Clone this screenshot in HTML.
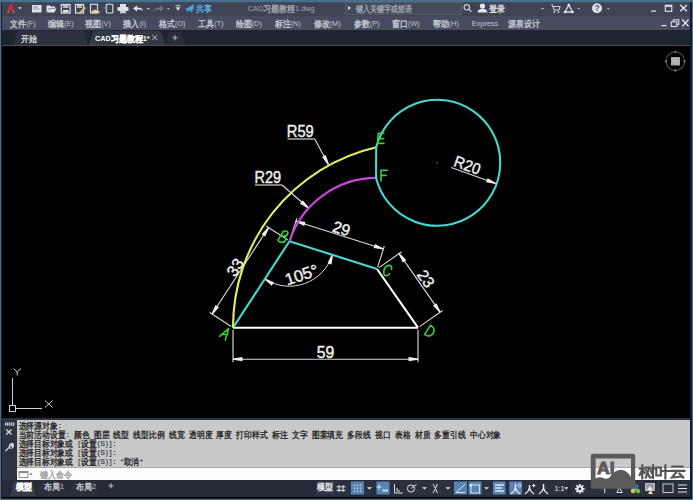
<!DOCTYPE html>
<html><head><meta charset="utf-8">
<style>
*{margin:0;padding:0;box-sizing:border-box}
html,body{width:693px;height:500px;overflow:hidden;background:#000}
body{position:relative;font-family:"Liberation Sans",sans-serif}
.a{position:absolute}
.t8{font-size:8px;line-height:9px;white-space:nowrap}
.menu span{position:absolute;top:0;font-size:8px;color:#c3c7ce;white-space:nowrap;line-height:13px}
.ui{font-family:"Liberation Sans",sans-serif;font-size:7.3px}
.cmd{font-family:"Liberation Mono",monospace;font-size:8px;letter-spacing:-0.9px}
.c{font-family:"Liberation Sans",sans-serif;font-size:1.22em;letter-spacing:0;baseline-shift:-0.08em}
.cmd .c{font-size:9.4px}
.c{stroke-width:0.38px}
.cmd .c{stroke-width:0.3px}
.cmd div{position:absolute;left:19px;font-size:8px;color:#1e1e1e;white-space:pre;line-height:9px}
</style></head><body>
<div class="a" style="left:0;top:0;width:693px;height:500px;background:#4a7090"></div>
<div class="a" style="left:1px;top:1.5px;width:690.5px;height:497px;background:#13202c"></div>
<div class="a" style="left:1.5px;top:2px;width:688.5px;height:495.5px;background:#000"></div>
<div class="a" style="left:1.5px;top:2px;width:688.5px;height:14px;background:#3f4455"></div>
<div class="a" style="left:1px;top:0;width:691px;height:2px;background:#4a7090"></div>
<div class="a" style="left:1.5px;top:2px;width:688.5px;height:1px;background:#3d4c62"></div>
<div class="a" style="left:1.5px;top:16px;width:688.5px;height:13px;background:#464b5f"></div>
<div class="a" style="left:1.5px;top:28px;width:688.5px;height:1.5px;background:#484d60"></div>
<div class="a" style="left:1.5px;top:29.5px;width:688.5px;height:15px;background:#1f252f"></div>
<div class="a" style="left:1.5px;top:44.5px;width:688.5px;height:1.5px;background:#4b5059"></div>
<div class="a" style="left:1.5px;top:418px;width:688.5px;height:2px;background:#2c323e"></div>
<div class="a" style="left:1.5px;top:420px;width:15.5px;height:60px;background:#2e3441"></div>
<div class="a" style="left:17px;top:420px;width:673px;height:47px;background:#c9c9c9"></div>
<div class="a" style="left:17px;top:467px;width:673px;height:1px;background:#a9a9a9"></div>
<div class="a" style="left:17px;top:468px;width:673px;height:12px;background:#fdfdfd"></div>
<div class="a" style="left:1.5px;top:480px;width:688.5px;height:16.5px;background:#262c37"></div>

<svg class="a" style="left:0;top:0" width="693" height="46" viewBox="0 0 693 46">
<!-- logo -->
<path d="M6.8,12.8 Q9,6 10.3,3.8 L11.7,3.8 Q13,6 15.2,12.8 L13,12.8 L11,9.8 L9,12.8 Z" fill="#b8323f"/>
<path d="M7,12.8 L8.8,10.8 L9.3,12.8 Z M15,12.8 L13.2,10.8 L12.7,12.8 Z" fill="#c87080"/>
<polygon points="18,7.3 21.6,7.3 19.8,9.5" fill="#e0e0e0"/>
<!-- new -->
<rect x="32" y="5" width="9.5" height="7.5" fill="#dde1e6"/>
<rect x="33.5" y="6.5" width="4" height="1" fill="#7a8088"/><rect x="33.5" y="8.5" width="6" height="1" fill="#9aa0a8"/>
<!-- open -->
<polygon points="46.5,5.5 50,5.5 51,6.5 55,6.5 55,8 49,8 47,12.5 46.5,12.5" fill="#dde1e6"/>
<polygon points="49,8.5 56.3,8.5 54.5,12.5 47.2,12.5" fill="#dde1e6"/>
<!-- save -->
<rect x="61.3" y="4.5" width="8.8" height="8.5" fill="none" stroke="#dde1e6" stroke-width="1.2"/>
<rect x="63" y="5" width="5.5" height="3" fill="#b8bdc4"/><rect x="63" y="10" width="5.5" height="2.5" fill="#dde1e6"/>
<!-- saveas -->
<rect x="75.5" y="4.5" width="8" height="8.5" fill="none" stroke="#dde1e6" stroke-width="1.2"/>
<rect x="77" y="5" width="5" height="3" fill="#b8bdc4"/>
<polygon points="79,12.5 84.5,7 85.8,8.3 80.3,13.5 78.8,13.5" fill="#e8c870"/>
<!-- publish -->
<rect x="90.5" y="4.3" width="7" height="8.7" fill="none" stroke="#dde1e6" stroke-width="1.1"/>
<polygon points="92,11 95,9.5 99.5,11.5 99.5,13.3 91,13.3" fill="#e0cf9a"/>
<!-- phone -->
<rect x="106.3" y="4.3" width="6.5" height="8.7" rx="0.8" fill="none" stroke="#dde1e6" stroke-width="1.1"/>
<polygon points="103.5,8 107.5,6.2 107.5,9.8" fill="#5aa0d8"/>
<!-- printer -->
<rect x="120" y="4" width="6" height="3" fill="#dde1e6"/>
<rect x="117.5" y="7" width="11" height="4" rx="0.8" fill="#dde1e6"/>
<rect x="120" y="10.5" width="6" height="2.8" fill="#c8ccd2"/>
<!-- undo -->
<path d="M133,8.5 L137,5.5 L137,7.5 Q142,7.3 143.4,10.8 Q141,9.3 137,9.6 L137,11.5 Z" fill="#dde1e6"/>
<polygon points="146.8,8 150,8 148.4,9.8" fill="#c8ccd2"/>
<!-- redo dim -->
<path d="M164,8.5 L160,5.5 L160,7.5 Q155,7.3 153.8,10.8 Q156,9.3 160,9.6 L160,11.5 Z" fill="#6e747e"/>
<polygon points="166.8,8 170,8 168.4,9.8" fill="#a8acb2"/>
<!-- customize -->
<rect x="175.5" y="5.2" width="5" height="1" fill="#d8dce0"/>
<polygon points="175.5,7.2 180.5,7.2 178,10.8" fill="#d8dce0"/>
<!-- share -->
<polygon points="185.5,9 194.5,4 192,12.5 189.5,10 188,12" fill="#4fa2dc"/>
<!-- search icon -->
<circle cx="466.8" cy="7.3" r="2.7" fill="none" stroke="#c8ccd2" stroke-width="1.2"/>
<line x1="468.8" y1="9.3" x2="471.3" y2="11.8" stroke="#c8ccd2" stroke-width="1.3"/>
<!-- user -->
<circle cx="482.5" cy="6" r="2.6" fill="#e4e6ea"/>
<path d="M477.5,12.5 Q478,8.8 482.5,8.8 Q487,8.8 487.5,12.5 Z" fill="#e4e6ea"/>
<polygon points="541,8 544,8 542.5,9.5" fill="#c8ccd2"/>
<!-- cart -->
<path d="M551,5 L552.5,5 L554,10 L559,10 L560,6.5 L553,6.5" fill="none" stroke="#c8ccd2" stroke-width="1.1"/>
<circle cx="554.5" cy="12" r="0.9" fill="#c8ccd2"/><circle cx="558.5" cy="12" r="0.9" fill="#c8ccd2"/>
<!-- network A -->
<path d="M568.8,5 L565,12 L572.5,12 Z" fill="none" stroke="#d8dce0" stroke-width="1.3"/>
<circle cx="568.8" cy="5" r="1.3" fill="#e8eaee"/><circle cx="565" cy="12" r="1.3" fill="#e8eaee"/><circle cx="572.5" cy="12" r="1.3" fill="#e8eaee"/>
<polygon points="577.3,8 580,8 578.7,9.5" fill="#c8ccd2"/>
<!-- help -->
<circle cx="597" cy="8.3" r="5" fill="#dcdfe3"/>
<text x="597" y="11.4" font-size="8.5" font-weight="bold" text-anchor="middle" fill="#555a63" font-family="Liberation Sans">?</text>
<polygon points="606.8,8 609.5,8 608.2,9.5" fill="#c8ccd2"/>
<!-- window controls -->
<rect x="651" y="10.5" width="5" height="1.2" fill="#e6e8ec"/>
<rect x="665.3" y="5.3" width="6.5" height="6" fill="none" stroke="#e6e8ec" stroke-width="1.1"/>
<rect x="665.3" y="5.3" width="6.5" height="1.5" fill="#e6e8ec"/>
<path d="M680.3,5 L686.8,11.3 M686.8,5 L680.3,11.3" stroke="#eceef2" stroke-width="1.2"/>
<!-- menu controls -->
<rect x="661.5" y="25" width="5" height="1.2" fill="#e6e8ec"/>
<rect x="673.3" y="19.8" width="5.5" height="4.5" fill="none" stroke="#e6e8ec" stroke-width="1"/>
<rect x="671.3" y="21.8" width="5.5" height="4.7" fill="#434856" stroke="#e6e8ec" stroke-width="1"/>
<path d="M682.3,19.5 L688.5,26.3 M688.5,19.5 L682.3,26.3" stroke="#eceef2" stroke-width="1.2"/>
<!-- tabs -->
<polygon points="14,45 17,31 84,31 88,45" fill="#2c313b"/>
<polygon points="88.5,45 93.5,31 160.5,31 165.5,45" fill="#343a45"/>
<polygon points="166,45 169.5,32 181.5,32 185,45" fill="#292e37"/>
<path d="M152.5,35.3 L157,39.8 M157,35.3 L152.5,39.8" stroke="#c8ccd2" stroke-width="1"/>
<path d="M172.5,37.8 L177.5,37.8 M175,35.3 L175,40.3" stroke="#aeb2b8" stroke-width="1.1"/>
</svg>


<div class="a" style="left:345px;top:2px;width:117px;height:13px;background:#454b58;border:1px solid #545b6b"></div>
<div class="a" style="left:348px;top:6px;width:0;height:0;border-left:3px solid #d8dce0;border-top:2.5px solid transparent;border-bottom:2.5px solid transparent"></div>


<svg class="a" style="left:0;top:0" width="693" height="500" viewBox="0 0 693 500">
<line x1="233.0" y1="329.7" x2="233.0" y2="362.2" stroke="#d8d8d8" stroke-width="1.15"/>
<line x1="418.0" y1="329.7" x2="418.0" y2="362.2" stroke="#d8d8d8" stroke-width="1.15"/>
<line x1="233.0" y1="359.2" x2="418.0" y2="359.2" stroke="#d8d8d8" stroke-width="1.15"/>
<polygon points="233.0,358.6 233.0,359.8 242.5,361.3 242.5,357.1" fill="#f0f0f0"/>
<polygon points="418.0,359.8 418.0,358.6 408.5,357.1 408.5,361.3" fill="#f0f0f0"/>
<line x1="231.3" y1="326.6" x2="209.6" y2="312.4" stroke="#d8d8d8" stroke-width="1.15"/>
<line x1="287.8" y1="240.1" x2="266.1" y2="225.9" stroke="#d8d8d8" stroke-width="1.15"/>
<line x1="212.1" y1="314.0" x2="268.6" y2="227.5" stroke="#d8d8d8" stroke-width="1.15"/>
<polygon points="211.6,313.7 212.6,314.4 219.0,307.2 215.5,304.9" fill="#f0f0f0"/>
<polygon points="269.1,227.9 268.1,227.2 261.6,234.3 265.1,236.6" fill="#f0f0f0"/>
<line x1="290.1" y1="239.3" x2="296.8" y2="218.3" stroke="#d8d8d8" stroke-width="1.15"/>
<line x1="377.6" y1="267.1" x2="384.3" y2="246.1" stroke="#d8d8d8" stroke-width="1.15"/>
<line x1="295.9" y1="221.2" x2="383.4" y2="249.0" stroke="#d8d8d8" stroke-width="1.15"/>
<polygon points="296.0,220.6 295.7,221.8 304.3,226.1 305.5,222.1" fill="#f0f0f0"/>
<polygon points="383.2,249.6 383.5,248.4 374.9,244.1 373.7,248.1" fill="#f0f0f0"/>
<line x1="378.6" y1="267.9" x2="401.6" y2="251.8" stroke="#d8d8d8" stroke-width="1.15"/>
<line x1="419.6" y1="326.6" x2="442.6" y2="310.5" stroke="#d8d8d8" stroke-width="1.15"/>
<line x1="399.1" y1="253.5" x2="440.1" y2="312.2" stroke="#d8d8d8" stroke-width="1.15"/>
<polygon points="399.6,253.2 398.6,253.9 402.9,262.5 406.3,260.1" fill="#f0f0f0"/>
<polygon points="439.6,312.6 440.6,311.9 436.4,303.2 433.0,305.7" fill="#f0f0f0"/>
<path d="M264.9,278.9 A45,45 0 0 0 332.4,254.8" fill="none" stroke="#d8d8d8" stroke-width="1"/>
<polygon points="265.2,278.4 264.6,279.4 271.7,285.8 274.0,282.3" fill="#f0f0f0"/>
<polygon points="333.0,255.0 331.8,254.6 327.5,263.2 331.5,264.5" fill="#f0f0f0"/>
<line x1="287.5" y1="139.0" x2="314.8" y2="139.0" stroke="#d8d8d8" stroke-width="1.15"/>
<line x1="314.8" y1="139.0" x2="328.4" y2="164.5" stroke="#d8d8d8" stroke-width="1.15"/>
<polygon points="327.9,164.8 328.9,164.2 325.8,155.1 322.1,157.1" fill="#f0f0f0"/>
<line x1="255.0" y1="185.0" x2="282.0" y2="185.0" stroke="#d8d8d8" stroke-width="1.15"/>
<line x1="282.0" y1="185.0" x2="308.5" y2="208.0" stroke="#d8d8d8" stroke-width="1.15"/>
<polygon points="308.1,208.5 308.9,207.5 302.7,200.2 299.9,203.4" fill="#f0f0f0"/>
<line x1="451.1" y1="167.5" x2="495.8" y2="183.5" stroke="#d8d8d8" stroke-width="1.15"/>
<polygon points="495.6,184.1 496.0,182.9 487.6,178.3 486.1,182.3" fill="#f0f0f0"/>
<line x1="233.0" y1="327.7" x2="418.0" y2="327.7" stroke="#ffffff" stroke-width="2.1"/>
<line x1="377.0" y1="269.0" x2="418.0" y2="327.7" stroke="#ffffff" stroke-width="2.1"/>
<line x1="233.0" y1="327.7" x2="289.5" y2="241.2" stroke="#44d9d2" stroke-width="2.1"/>
<line x1="289.5" y1="241.2" x2="377.0" y2="269.0" stroke="#44d9d2" stroke-width="2.1"/>
<path d="M233.0,327.7 A185.0,185.0 0 0 1 376.2,147.2" fill="none" stroke="#e6ef5a" stroke-width="2.1"/>
<path d="M289.5,241.2 A91.8,91.8 0 0 1 376.1,177.9" fill="none" stroke="#cc46de" stroke-width="2.1"/>
<path d="M376.2,147.2 A63.0,63.0 0 1 1 376.1,177.9 Z" fill="none" stroke="#44d9d2" stroke-width="2.1" stroke-linejoin="round"/>
<circle cx="437.3" cy="162.7" r="0.8" fill="#777"/>
<g font-family="Liberation Sans" fill="#ececec" stroke="#ececec" stroke-width="0.45" font-size="15.8">
<text x="325.5" y="358" text-anchor="middle">59</text>
<text transform="translate(235.2,267.3) rotate(-57.2)" text-anchor="middle" dominant-baseline="central">33</text>
<text transform="translate(341.5,228.6) rotate(17.6)" text-anchor="middle" dominant-baseline="central">29</text>
<text transform="translate(425.9,278.7) rotate(55.2)" text-anchor="middle" dominant-baseline="central">23</text>
<text transform="translate(301.5,274.5) rotate(-18.3)" text-anchor="middle" dominant-baseline="central" font-size="16.5">105°</text>
<text x="286.8" y="137.2" textLength="27" lengthAdjust="spacingAndGlyphs">R59</text>
<text x="254.5" y="182.6" textLength="26.5" lengthAdjust="spacingAndGlyphs">R29</text>
<text transform="translate(452.8,165.8) rotate(19.7)" font-size="16" textLength="27" lengthAdjust="spacingAndGlyphs">R20</text>
</g>
<g fill="none" stroke="#36d236" stroke-width="1.6" stroke-linecap="round" stroke-linejoin="round">
<path d="M219.6,336.4 L228.6,328.6 L225.3,340 M222.6,334.2 L227.4,334.6"/>
<path d="M278,240.2 L283.4,231.2 Q288.6,230.4 287.8,233.8 Q287.2,236.6 281.8,236 M281.8,236 Q286.3,236.4 285.8,239.3 Q285.2,242.6 281,242.3 Q278.5,242 278,240.2"/>
<path d="M391.6,269.4 Q392.2,265 388.6,265.4 Q384.6,266.2 383.8,271.5 Q383.4,276 386.8,275.6 Q388.6,275.2 389.6,273.8"/>
<path d="M424.6,334.4 L430.4,325.4 Q434.4,327.2 434,330.6 Q433.4,334.8 429.6,335.9 Q426.6,336.3 424.6,334.4 Z"/>
<path d="M383.8,133.2 H378.2 L377.6,143.4 H384 M378,138.6 H383.6"/>
<path d="M387.4,170.2 H381 V181 M381.4,175.4 H386"/>
</g>
</svg>


<svg class="a" style="left:655px;top:46px" width="36" height="36" viewBox="655 46 36 36">
<circle cx="675.3" cy="61.2" r="9.3" fill="none" stroke="#444" stroke-width="1.4"/>
<rect x="671" y="57" width="9" height="8.5" fill="#a6a6a6"/>
<rect x="672.3" y="58.3" width="6.4" height="5.9" fill="#b4b4b4"/>
<polygon points="675.3,50.3 673.8,52.6 676.8,52.6" fill="#8a8a8a"/>
<polygon points="675.3,72 673.8,69.8 676.8,69.8" fill="#8a8a8a"/>
<polygon points="664.5,61.2 666.8,59.7 666.8,62.7" fill="#8a8a8a"/>
<polygon points="686,61.2 683.8,59.7 683.8,62.7" fill="#8a8a8a"/>
</svg>


<svg class="a" style="left:0;top:360px" width="70" height="58" viewBox="0 360 70 58">
<g stroke="#d0d0d0" stroke-width="1" fill="none">
<line x1="12.5" y1="378" x2="12.5" y2="405"/>
<line x1="15.5" y1="408.5" x2="42" y2="408.5"/>
<rect x="9.5" y="405.5" width="6" height="6"/>
<path d="M13.5,368.5 L17.2,372 L21,368.5 M17.2,372 L17.2,375.5"/>
<path d="M45,400.5 L52.5,407.5 M52.5,400.5 L45,407.5"/>
</g>
</svg>


<svg class="a" style="left:0;top:418px" width="40" height="62" viewBox="0 418 40 62">
<g fill="#c8ccd2"><rect x="5" y="422.5" width="1.4" height="3.2"/><rect x="7" y="422.5" width="1.4" height="3.2"/><rect x="9" y="422.5" width="1.4" height="3.2"/><rect x="11" y="422.5" width="1.4" height="3.2"/><rect x="13" y="422.5" width="1.4" height="3.2"/></g>
<path d="M6.3,429.5 L11.5,434.5 M11.5,429.5 L6.3,434.5" stroke="#e0e2e6" stroke-width="1.2"/>
<path d="M5.5,451 L10.5,446 M9.3,447.3 Q9,443.3 12.8,443.6 L11.3,445.3 L12,446.2 L13.5,445 Q13.8,448.6 9.8,448.2" stroke="#e0e2e6" stroke-width="1.1" fill="none"/>
<rect x="19" y="471.5" width="9" height="6" fill="none" stroke="#8a8e94" stroke-width="1"/>
<rect x="19" y="471.5" width="9" height="1.6" fill="#8a8e94"/>
<polygon points="29.5,473.5 32.5,473.5 31,475.3" fill="#555"/>
</svg>


<svg class="a" style="left:0;top:480px" width="693" height="16" viewBox="0 480 693 16">
<!-- bottom tabs -->
<polygon points="10,496 14,481.5 32,481.5 36,496" fill="#353b47"/>
<polygon points="37,496 41,481.5 63,481.5 67,496" fill="#2a2f39"/>
<polygon points="69,496 73,481.5 95,481.5 99,496" fill="#2a2f39"/>
<path d="M108.5,485.8 h5 M111,483.3 v5" stroke="#c0c4ca" stroke-width="1.1"/>
<!-- status groups -->
<rect x="316" y="481" width="19" height="14" fill="#303744"/>
<rect x="335.5" y="481" width="38" height="14" fill="#2b323e"/>
<rect x="351" y="481.5" width="13" height="13" fill="#5784b5"/>
<rect x="375" y="481" width="16" height="14" fill="#2b323e"/>
<rect x="376.5" y="481.5" width="13" height="13" fill="#5784b5"/>
<rect x="391.5" y="481" width="61" height="14" fill="#2b323e"/>
<rect x="453" y="481" width="37" height="14" fill="#2b323e"/>
<rect x="454" y="481.5" width="13" height="13" fill="#5784b5"/>
<rect x="468.5" y="481.5" width="13" height="13" fill="#5784b5"/>
<rect x="491" y="481" width="80" height="14" fill="#2b323e"/>
<rect x="493" y="481.5" width="12.5" height="13" fill="#5784b5"/>
<rect x="509.3" y="481.5" width="12.7" height="13" fill="#5784b5"/>
<rect x="572" y="481" width="83" height="14" fill="#2b323e"/>
<rect x="657" y="481" width="33" height="14" fill="#2b323e"/>
<g stroke="#dfe3e8" stroke-width="1" fill="none">
<path d="M339,485 v7 M343,485 v7 M336.5,486.8 h9 M336.5,490.3 h9"/>

<path d="M379,484.5 v5 M376.5,487 h5"/>
<path d="M382.5,490.5 h5.5" stroke-width="1.8"/>
<path d="M394.5,484 v9 h8" />
<path d="M397,488 v3 h3"/>
<circle cx="411" cy="488.5" r="3.6"/>
<path d="M411,488.5 L416.5,484.3"/>
<path d="M433,484 l2.5,4.5 l-2.5,4.5 M437.3,484 l-1.8,4.5 l1.8,4.5"/>
<path d="M456,492.5 L465,484.3 M456,492.5 h9"/>
<rect x="471" y="485" width="8.5" height="8"/>
<path d="M495,485 h9 M495,488 h7 M495,491 h9" stroke-width="1.5"/>
</g>
<circle cx="354.5" cy="485.3" r="0.75" fill="#c6ecff"/><circle cx="354.5" cy="488.3" r="0.75" fill="#c6ecff"/><circle cx="354.5" cy="491.3" r="0.75" fill="#c6ecff"/><circle cx="357.5" cy="485.3" r="0.75" fill="#c6ecff"/><circle cx="357.5" cy="488.3" r="0.75" fill="#c6ecff"/><circle cx="357.5" cy="491.3" r="0.75" fill="#c6ecff"/><circle cx="360.5" cy="485.3" r="0.75" fill="#c6ecff"/><circle cx="360.5" cy="488.3" r="0.75" fill="#c6ecff"/><circle cx="360.5" cy="491.3" r="0.75" fill="#c6ecff"/>
<g fill="#dfe3e8">
<polygon points="367,487.3 372,487.3 369.5,489.5"/>
<polygon points="422,487.3 427,487.3 424.5,489.5"/>
<polygon points="445.5,487.3 450.5,487.3 448,489.5"/>
<polygon points="484,487.3 489,487.3 486.5,489.5"/>
<polygon points="564,487.3 568.5,487.3 566.3,489.5"/>
<rect x="469.5" y="484" width="2.5" height="2.5"/>
</g>
<g stroke="#e8ebef" stroke-width="1.5" fill="none" stroke-linecap="round">
<path d="M515.5,484.5 v3.5 Q515,491 511.5,493.5 M515.5,488 Q516,491 519.5,493.5"/>
<path d="M529.5,485.5 v2.5 Q529,491 525.5,493.5 M529.5,488 Q530,491 533.5,493.5"/>
<path d="M543.5,484.5 v3.5 Q543,491 539.5,493.5 M543.5,488 Q544,491 547.5,493.5"/>
</g>
<circle cx="519.5" cy="485.5" r="1.5" fill="none" stroke="#e8ebef" stroke-width="0.9"/>
<path d="M532,485.5 h3.5 M533.75,483.8 v3.5" stroke="#e8ebef" stroke-width="1"/>
<g transform="translate(579.8,488.8)">
<circle r="3.4" fill="#e6e9ee"/>
<path d="M0,-4.8 V4.8 M-4.8,0 H4.8 M-3.4,-3.4 L3.4,3.4 M3.4,-3.4 L-3.4,3.4" stroke="#e6e9ee" stroke-width="1.8"/>
<circle r="1.4" fill="#2b323e"/>
</g>
<g fill="none" stroke="#dfe3e8" stroke-width="1">
<path d="M602.5,485 h4.5 M604.7,485 v8"/>
<path d="M616.8,492.5 l2.7,-5 l2.7,5 Z"/>
</g>
<polygon points="630.5,490.5 635,486 638,489 634,493" fill="#3f8fd8"/>
<circle cx="633" cy="491" r="2.2" fill="#e8c040"/><circle cx="638" cy="491" r="2.2" fill="#7cc040"/>
<path d="M635.5,484.3 l3,2.6" stroke="#3f8fd8" stroke-width="1.5"/>
<rect x="645.5" y="483.5" width="9" height="7" fill="#9aa0a8" stroke="#d0d4da" stroke-width="0.8"/>
<polygon points="647,490 650,486 653,490" fill="#e6e8ea"/>
<polygon points="648,494 650.5,489.5 653,494" fill="#e8dca0"/>
<rect x="568.3" y="481" width="1" height="14" fill="#1a1f27"/>
<rect x="660" y="481" width="1" height="14" fill="#1a1f27"/>
<rect x="663" y="484" width="10" height="8.5" fill="none" stroke="#c8ccd2" stroke-width="1"/>
<path d="M678,485 h9 M678,488.5 h9 M678,492 h9" stroke="#dde1e6" stroke-width="1.2"/>
</svg>


<svg class="a" style="left:585px;top:448px" width="105" height="45" viewBox="585 448 105 45">
<path fill="#5b5b5b" fill-rule="evenodd" d="M593,453.8 h40 q2.2,0 2.2,2.2 v30.6 q0,2.2 -2.2,2.2 h-40 q-2.2,0 -2.2,-2.2 v-30.6 q0,-2.2 2.2,-2.2 Z M595.6,458.6 v19.8 Q599,476.5 602,477.5 Q605,479.5 609,478 Q614,470 621.5,469.8 Q627,470.5 631,477 v-18.4 Z"/>
<text x="597" y="473.6" font-family="Liberation Sans" font-weight="bold" font-size="16" fill="#5b5b5b" stroke="#5b5b5b" stroke-width="1" textLength="17.5" lengthAdjust="spacingAndGlyphs">AI</text>
<g stroke="#565656" stroke-width="2.2" fill="none" stroke-linecap="square">
<path d="M639.8,468.6 h5 M642.3,465.3 v13 M642.3,469.5 l-2.6,5.5 M643,470.5 l1.7,2.5"/>
<path d="M645.8,467.6 h3.6 l-3.6,10 M646.3,470.5 l3.6,7"/>
<path d="M650.5,468.6 h4 M653,465.3 v12.5 l-1.2,-0.6 M651,471.3 l0.9,1.8"/>
<path d="M656.3,467.5 h4.5 v8 h-4.5 Z"/>
<path d="M661.5,471 h7.8 M665.4,465.3 v13"/>
<path d="M672.3,466.5 h10.3 M670.8,470.8 h13.6 M676.8,471.5 l-4.8,6 l10.5,-1 M679.5,473.5 l3.8,4.2"/>
</g>
</svg>

<svg class="a" style="left:0;top:0" width="693" height="500" viewBox="0 0 693 500">
<g class="ui">
<text x="196.3" y="11" fill="#5eaae2" stroke="#5eaae2" stroke-width="0"><tspan class="c" textLength="16.0" lengthAdjust="spacingAndGlyphs">共享</tspan></text>
<text x="247.8" y="11" fill="#a4a9b0" stroke="#a4a9b0" stroke-width="0">CAD<tspan class="c" textLength="32.0" lengthAdjust="spacingAndGlyphs">习题教程</tspan>1.dwg</text>
<text x="356" y="11" fill="#9da2aa" stroke="#9da2aa" stroke-width="0" font-size="7.1"><tspan class="c" textLength="56.0" lengthAdjust="spacingAndGlyphs">键入关键字或短语</tspan></text>
<text x="489.3" y="11" fill="#e0e2e6" stroke="#e0e2e6" stroke-width="0"><tspan class="c" textLength="16.0" lengthAdjust="spacingAndGlyphs">登录</tspan></text>
</g>
<g class="ui" fill="#c3c7ce" stroke="#c3c7ce" stroke-width="0">
<text x="10.4" y="25.6"><tspan class="c" textLength="16.0" lengthAdjust="spacingAndGlyphs">文件</tspan>(F)</text>
<text x="48" y="25.6"><tspan class="c" textLength="16.0" lengthAdjust="spacingAndGlyphs">编辑</tspan>(E)</text>
<text x="85.2" y="25.6"><tspan class="c" textLength="16.0" lengthAdjust="spacingAndGlyphs">视图</tspan>(V)</text>
<text x="123.4" y="25.6"><tspan class="c" textLength="16.0" lengthAdjust="spacingAndGlyphs">插入</tspan>(I)</text>
<text x="159" y="25.6"><tspan class="c" textLength="16.0" lengthAdjust="spacingAndGlyphs">格式</tspan>(O)</text>
<text x="198" y="25.6"><tspan class="c" textLength="16.0" lengthAdjust="spacingAndGlyphs">工具</tspan>(T)</text>
<text x="235.7" y="25.6"><tspan class="c" textLength="16.0" lengthAdjust="spacingAndGlyphs">绘图</tspan>(D)</text>
<text x="274.7" y="25.6"><tspan class="c" textLength="16.0" lengthAdjust="spacingAndGlyphs">标注</tspan>(N)</text>
<text x="313.7" y="25.6"><tspan class="c" textLength="16.0" lengthAdjust="spacingAndGlyphs">修改</tspan>(M)</text>
<text x="354" y="25.6"><tspan class="c" textLength="16.0" lengthAdjust="spacingAndGlyphs">参数</tspan>(P)</text>
<text x="392" y="25.6"><tspan class="c" textLength="16.0" lengthAdjust="spacingAndGlyphs">窗口</tspan>(W)</text>
<text x="432.8" y="25.6"><tspan class="c" textLength="16.0" lengthAdjust="spacingAndGlyphs">帮助</tspan>(H)</text>
<text x="471.7" y="25.6">Express</text>
<text x="508" y="25.6"><tspan class="c" textLength="32.0" lengthAdjust="spacingAndGlyphs">源泉设计</tspan></text>
</g>
<g class="ui">
<text x="21" y="40.5" fill="#cdd1d6" stroke="#cdd1d6" stroke-width="0"><tspan class="c" textLength="16.0" lengthAdjust="spacingAndGlyphs">开始</tspan></text>
<text x="95" y="40.5" fill="#ffffff" font-weight="bold" stroke="#ffffff" stroke-width="0">CAD<tspan class="c" textLength="32.0" lengthAdjust="spacingAndGlyphs">习题教程</tspan>1*</text>
</g>
<g class="cmd" fill="#1c1c1c" stroke="#1c1c1c" stroke-width="0">
<text x="18.5" y="428.4" textLength="42.8"><tspan class="c" textLength="39.0" lengthAdjust="spacingAndGlyphs">选择源对象</tspan>:</text>
<text x="18.5" y="437.2" textLength="482.6"><tspan class="c" textLength="46.8" lengthAdjust="spacingAndGlyphs">当前活动设置</tspan>:  <tspan class="c" textLength="15.6" lengthAdjust="spacingAndGlyphs">颜色</tspan> <tspan class="c" textLength="15.6" lengthAdjust="spacingAndGlyphs">图层</tspan> <tspan class="c" textLength="15.6" lengthAdjust="spacingAndGlyphs">线型</tspan> <tspan class="c" textLength="31.2" lengthAdjust="spacingAndGlyphs">线型比例</tspan> <tspan class="c" textLength="15.6" lengthAdjust="spacingAndGlyphs">线宽</tspan> <tspan class="c" textLength="23.4" lengthAdjust="spacingAndGlyphs">透明度</tspan> <tspan class="c" textLength="15.6" lengthAdjust="spacingAndGlyphs">厚度</tspan> <tspan class="c" textLength="31.2" lengthAdjust="spacingAndGlyphs">打印样式</tspan> <tspan class="c" textLength="15.6" lengthAdjust="spacingAndGlyphs">标注</tspan> <tspan class="c" textLength="15.6" lengthAdjust="spacingAndGlyphs">文字</tspan> <tspan class="c" textLength="31.2" lengthAdjust="spacingAndGlyphs">图案填充</tspan> <tspan class="c" textLength="23.4" lengthAdjust="spacingAndGlyphs">多段线</tspan> <tspan class="c" textLength="15.6" lengthAdjust="spacingAndGlyphs">视口</tspan> <tspan class="c" textLength="15.6" lengthAdjust="spacingAndGlyphs">表格</tspan> <tspan class="c" textLength="15.6" lengthAdjust="spacingAndGlyphs">材质</tspan> <tspan class="c" textLength="31.2" lengthAdjust="spacingAndGlyphs">多重引线</tspan> <tspan class="c" textLength="31.2" lengthAdjust="spacingAndGlyphs">中心对象</tspan></text>
<text x="18.5" y="446.1" textLength="97.3"><tspan class="c" textLength="54.6" lengthAdjust="spacingAndGlyphs">选择目标对象或</tspan> [<tspan class="c" textLength="15.6" lengthAdjust="spacingAndGlyphs">设置</tspan>(S)]:</text>
<text x="18.5" y="454.9" textLength="97.3"><tspan class="c" textLength="54.6" lengthAdjust="spacingAndGlyphs">选择目标对象或</tspan> [<tspan class="c" textLength="15.6" lengthAdjust="spacingAndGlyphs">设置</tspan>(S)]:</text>
<text x="18.5" y="463.8" textLength="124.5"><tspan class="c" textLength="54.6" lengthAdjust="spacingAndGlyphs">选择目标对象或</tspan> [<tspan class="c" textLength="15.6" lengthAdjust="spacingAndGlyphs">设置</tspan>(S)]: *<tspan class="c" textLength="15.6" lengthAdjust="spacingAndGlyphs">取消</tspan>*</text>
</g>
<g class="ui">
<text x="39.7" y="477" fill="#a0a0a0" stroke="#a0a0a0" stroke-width="0"><tspan class="c" textLength="32.0" lengthAdjust="spacingAndGlyphs">键入命令</tspan></text>
<text x="15.9" y="489.4" fill="#ffffff" font-weight="bold" stroke="#ffffff" stroke-width="0"><tspan class="c" textLength="16.0" lengthAdjust="spacingAndGlyphs">模型</tspan></text>
<text x="44" y="489.4" fill="#c4c8ce" stroke="#c4c8ce" stroke-width="0"><tspan class="c" textLength="16.0" lengthAdjust="spacingAndGlyphs">布局</tspan>1</text>
<text x="76" y="489.4" fill="#c4c8ce" stroke="#c4c8ce" stroke-width="0"><tspan class="c" textLength="16.0" lengthAdjust="spacingAndGlyphs">布局</tspan>2</text>
<text x="317.3" y="489.4" fill="#e8eaee" stroke="#e8eaee" stroke-width="0"><tspan class="c" textLength="16.0" lengthAdjust="spacingAndGlyphs">模型</tspan></text>
<text x="554.5" y="491" fill="#e0e3e8" stroke="#e0e3e8" stroke-width="0">1:1</text>
</g>
</svg>

</body></html>
